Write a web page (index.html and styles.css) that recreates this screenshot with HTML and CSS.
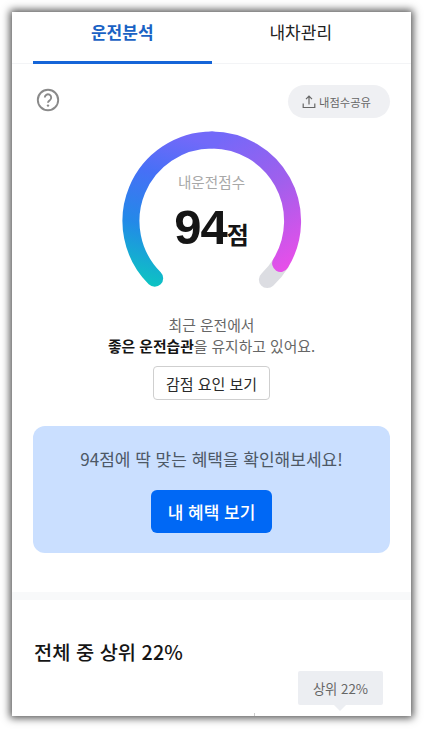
FILE: index.html
```html
<!DOCTYPE html>
<html lang="ko">
<head>
<meta charset="utf-8">
<title>운전분석</title>
<link rel="stylesheet" href="styles.css">
</head>
<body>
<div class="frame">
  <nav class="tabs">
    <div class="tab tab-active">운전분석</div>
    <div class="tab">내차관리</div>
  </nav>
  <section class="score">
    <div class="tools">
      <svg class="help" width="24" height="24" viewBox="0 0 24 24">
        <circle cx="12" cy="12" r="10.2" fill="none" stroke="#8a8a8a" stroke-width="1.9"/>
        <path d="M8.8 9.6a3.2 3.2 0 1 1 5 2.6c-1.2.8-1.8 1.3-1.8 2.6" fill="none" stroke="#8a8a8a" stroke-width="1.9"/>
        <circle cx="12" cy="17.6" r="1.2" fill="#8a8a8a"/>
      </svg>
      <div class="share">
        <svg width="14" height="14" viewBox="0 0 14 14">
          <path d="M7 9.5V1.5M4 4.2 7 1.2l3 3M1.2 8.5v4h11.6v-4" fill="none" stroke="#666" stroke-width="1.2"/>
        </svg>
        <span>내점수공유</span>
      </div>
    </div>
    <div class="gauge">
      <svg class="gauge-arc" width="180" height="170" viewBox="0 0 180 170">
        <defs>
          <linearGradient id="gLeft" gradientUnits="userSpaceOnUse" x1="0" y1="148" x2="40" y2="0">
            <stop offset="0" stop-color="#0cc5c2"/>
            <stop offset=".38" stop-color="#2389e8"/>
            <stop offset=".72" stop-color="#4670f6"/>
            <stop offset="1" stop-color="#7269f9"/>
          </linearGradient>
          <linearGradient id="gRight" gradientUnits="userSpaceOnUse" x1="90" y1="9" x2="170" y2="135">
            <stop offset="0" stop-color="#7269f9"/>
            <stop offset=".5" stop-color="#a25fec"/>
            <stop offset="1" stop-color="#e84fe9"/>
          </linearGradient>
        </defs>
        <path d="M145.4 148.6A81 81 0 0 0 159 132" fill="none" stroke="#dcdde2" stroke-width="17" stroke-linecap="round"/>
        <path d="M158.6 132.4A81 81 0 0 0 90 9" fill="none" stroke="url(#gRight)" stroke-width="17" stroke-linecap="round"/>
        <path d="M90 9A81 81 0 0 0 32.7 147.3" fill="none" stroke="url(#gLeft)" stroke-width="17" stroke-linecap="round"/>
      </svg>
      <div class="gauge-text">
        <div class="gauge-label">내운전점수</div>
        <div class="gauge-value"><b>94</b><span>점</span></div>
      </div>
    </div>
    <p class="summary">최근 운전에서<br><strong>좋은 운전습관</strong>을 유지하고 있어요.</p>
    <button class="ghost-btn">감점 요인 보기</button>
    <div class="promo">
      <p>94점에 딱 맞는 혜택을 확인해보세요!</p>
      <button class="primary-btn">내 혜택 보기</button>
    </div>
  </section>
  <div class="band"></div>
  <section class="rank">
    <h2>전체 중 상위 22%</h2>
    <div class="tip-row"><div class="tip">상위 22%</div></div>
    <div class="tick"></div>
  </section>
</div>
</body>
</html>
```

FILE: styles.css
```css
* { box-sizing: border-box; }
html, body { margin: 0; height: 729px; overflow: hidden; background: #fff; }
body {
  padding: 12px 13px 13px 12px;
  font-family: "Noto Sans CJK KR", "Liberation Sans", sans-serif;
  color: #1a1a1a;
}
.frame {
  height: 704px;
  background: #fff;
  overflow: hidden;
  box-shadow: 0 0 8px 2px rgba(0,0,0,.7);
}
.tabs {
  display: flex;
  height: 52px;
  padding: 0 21px;
  border-bottom: 1px solid #f3f4f6;
}
.tab {
  flex: 1;
  display: flex;
  align-items: center;
  justify-content: center;
  padding-bottom: 12px;
  font-size: 17px;
  font-weight: 400;
  color: #222;
}
.tab-active {
  color: #1a62c4;
  font-weight: 700;
  border-bottom: 3px solid #1565d8;
  margin-bottom: -1px;
  padding-bottom: 10px;
}
.score { padding: 21px 21px 0; display: flex; flex-direction: column; align-items: center; }
.tools {
  align-self: stretch;
  display: flex;
  justify-content: space-between;
  align-items: center;
  height: 33px;
  padding-left: 3px;
}
.help { margin-top: -3px; }
.share {
  width: 102px;
  height: 33px;
  border-radius: 17px;
  background: #eff0f3;
  display: flex;
  align-items: center;
  justify-content: center;
  gap: 3px;
  padding-right: 5px;
  font-size: 11.3px;
  color: #666;
}
.gauge {
  display: grid;
  width: 180px;
  height: 170px;
  margin-top: 13px;
}
.gauge-arc, .gauge-text { grid-area: 1 / 1; }
.gauge-text { display: flex; flex-direction: column; align-items: center; padding-top: 40px; }
.gauge-label { font-size: 14.6px; line-height: 22px; color: #a8a8a8; }
.gauge-value { display: flex; align-items: baseline; margin-top: 6px; line-height: 56px; }
.gauge-value b { font-family: "Liberation Sans", sans-serif; font-size: 49px; font-weight: 700; color: #151515; letter-spacing: -1px; }
.gauge-value span { font-size: 24px; font-weight: 700; color: #151515; }
.summary {
  margin: 13px 0 0;
  text-align: center;
  font-size: 14.8px;
  line-height: 21px;
  color: #666;
}
.summary strong { color: #151515; font-weight: 700; }
.ghost-btn {
  margin-top: 10px;
  width: 117px;
  height: 34px;
  padding: 0;
  background: #fff;
  border: 1px solid #cfcfcf;
  border-radius: 4px;
  font: 400 15px "Noto Sans CJK KR", sans-serif;
  color: #2a2a2a;
}
.promo {
  align-self: stretch;
  margin-top: 26px;
  height: 127px;
  background: #cadfff;
  border-radius: 12px;
  display: flex;
  flex-direction: column;
  align-items: center;
  padding-top: 20px;
}
.promo p { margin: 0; font-size: 17px; line-height: 25px; color: #4d5866; }
.primary-btn {
  margin-top: 19px;
  width: 121px;
  height: 43px;
  padding: 0;
  border: 0;
  border-radius: 6px;
  background: #0068f5;
  color: #fff;
  font: 500 17px "Noto Sans CJK KR", sans-serif;
}
.band { height: 8px; margin-top: 39px; background: #f8f9fa; }
.rank { padding: 37px 21px 0; }
.rank h2 { margin: 0; font-size: 19.8px; font-weight: 500; line-height: 30px; color: #151515; padding-left: 1px; }
.tip-row { display: flex; justify-content: flex-end; margin-top: 4px; padding-right: 7px; }
.tip {
  position: relative;
  width: 85px;
  height: 34px;
  background: #eceef2;
  border-radius: 2px;
  display: flex;
  align-items: center;
  justify-content: center;
  font-size: 13.3px;
  color: #666;
}
.tip::after {
  content: "";
  position: absolute;
  left: 36px;
  bottom: -6px;
  border: 6px solid transparent;
  border-bottom: 0;
  border-top-color: #eceef2;
}
.tick { width: 1px; height: 6px; margin: 8px 0 0 221px; background: #ccc; }
```
